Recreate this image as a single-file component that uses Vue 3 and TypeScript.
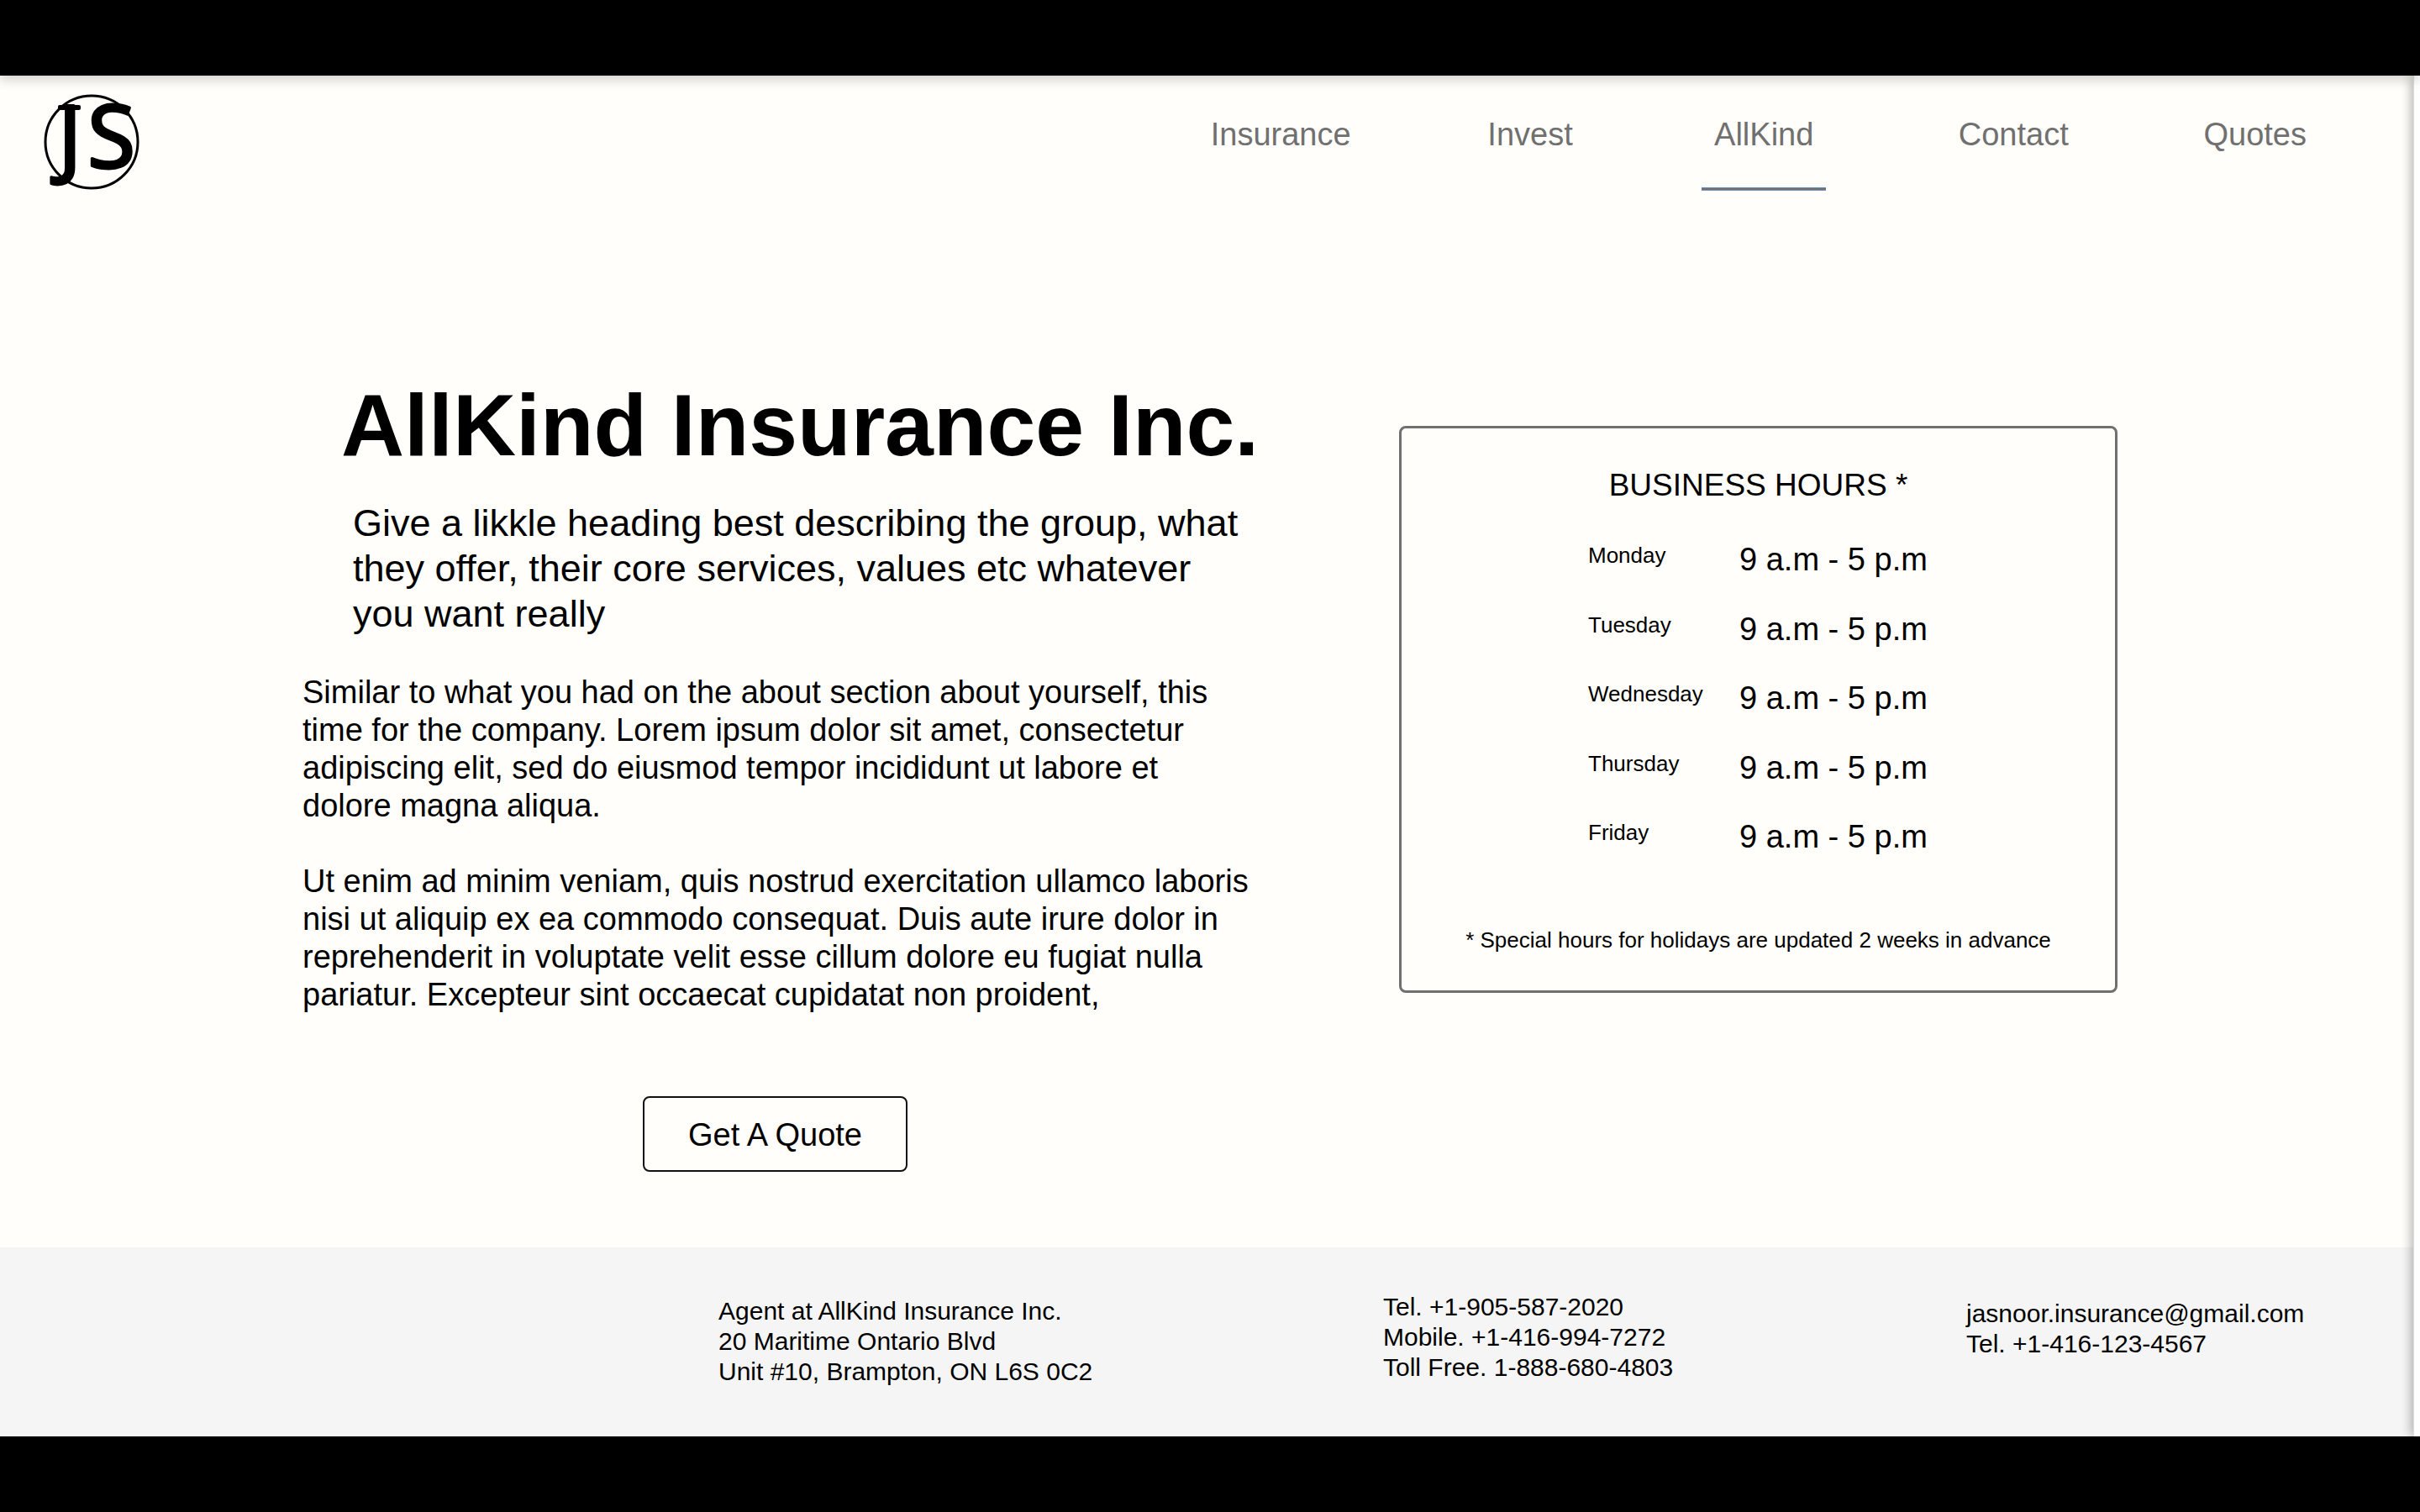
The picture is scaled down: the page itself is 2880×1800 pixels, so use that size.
<script setup lang="ts">
interface NavItem {
  label: string
  active?: boolean
}

const navItems: NavItem[] = [
  { label: 'Insurance' },
  { label: 'Invest' },
  { label: 'AllKind', active: true },
  { label: 'Contact' },
  { label: 'Quotes' },
]

const days: string[] = ['Monday', 'Tuesday', 'Wednesday', 'Thursday', 'Friday']
const openHours = '9 a.m - 5 p.m'

const intro = [
  'Give a likkle heading best describing the group, what',
  'they offer, their core services, values etc whatever',
  'you want really',
].join('\n')

const paragraphs: string[] = [
  [
    'Similar to what you had on the about section about yourself, this',
    'time for the company. Lorem ipsum dolor sit amet, consectetur',
    'adipiscing elit, sed do eiusmod tempor incididunt ut labore et',
    'dolore magna aliqua.',
  ].join('\n'),
  [
    'Ut enim ad minim veniam, quis nostrud exercitation ullamco laboris',
    'nisi ut aliquip ex ea commodo consequat. Duis aute irure dolor in',
    'reprehenderit in voluptate velit esse cillum dolore eu fugiat nulla',
    'pariatur. Excepteur sint occaecat cupidatat non proident,',
  ].join('\n'),
]
</script>

<template>
  <div class="screen">
    <div class="bar bar-top"></div>
    <div class="page">
      <div class="content">
        <header class="header">
          <a class="logo" href="#" aria-label="JS home">
            <svg viewBox="0 0 120 120" width="120" height="120">
              <circle cx="61" cy="61" r="55" fill="none" stroke="#000" stroke-width="3" />
              <rect x="21" y="17" width="27" height="6" rx="2" />
              <text class="logo-j" x="21" y="92">J</text>
              <text class="logo-s" x="56" y="92">S</text>
            </svg>
          </a>
          <nav class="nav">
            <a
              v-for="item in navItems"
              :key="item.label"
              href="#"
              class="nav-link"
              :class="{ active: item.active }"
            >{{ item.label }}</a>
          </nav>
        </header>

        <main class="main">
          <section class="about">
            <h1 class="title">AllKind Insurance Inc.</h1>
            <p class="intro">{{ intro }}</p>
            <p v-for="(text, i) in paragraphs" :key="i" class="copy">{{ text }}</p>
            <button type="button" class="quote">Get A Quote</button>
          </section>

          <section class="card">
            <h2 class="card-title">BUSINESS HOURS *</h2>
            <table class="hours">
              <tbody>
                <tr v-for="day in days" :key="day">
                  <th scope="row">{{ day }}</th>
                  <td>{{ openHours }}</td>
                </tr>
              </tbody>
            </table>
            <p class="note">* Special hours for holidays are updated 2 weeks in advance</p>
          </section>
        </main>

        <footer class="footer">
          <address class="col office">
            Agent at AllKind Insurance Inc.<br />20 Maritime Ontario Blvd<br />Unit #10, Brampton, ON L6S 0C2
          </address>
          <address class="col phones">
            Tel. +1-905-587-2020<br />Mobile. +1-416-994-7272<br />Toll Free. 1-888-680-4803
          </address>
          <address class="col direct">
            <a href="mailto:jasnoor.insurance@gmail.com">jasnoor.insurance@gmail.com</a><br />Tel. +1-416-123-4567
          </address>
        </footer>
      </div>
      <div class="rail"></div>
    </div>
    <div class="bar"></div>
  </div>
</template>

<style>
body {
  margin: 0;
  background: #000;
}
</style>

<style scoped>
.screen {
  display: flex;
  flex-direction: column;
  min-height: 100vh;
  overflow: hidden;
  color: #000;
  font-family: "Liberation Sans", Arial, sans-serif;
  font-size: 38px;
  line-height: 45px;
}

.bar {
  position: relative;
  z-index: 2;
  flex: none;
  height: 90px;
  background: #000;
}

.bar-top {
  box-shadow: 0 6px 12px rgba(0, 0, 0, 0.16);
}

.page {
  display: flex;
  flex: 1;
  background: #fffefa;
}

.content {
  display: flex;
  flex: 1;
  flex-direction: column;
  min-width: 0;
}

.rail {
  position: relative;
  z-index: 1;
  flex: none;
  box-sizing: border-box;
  width: 8px;
  border-left: 1px solid #ddd;
  background: #fff;
  box-shadow: 0 0 14px rgba(0, 0, 0, 0.5);
}

.header {
  display: flex;
  align-items: flex-start;
  justify-content: space-between;
  height: 158px;
  box-sizing: border-box;
  padding: 18px 112px 0 48px;
}

.logo {
  display: block;
  flex: none;
  height: 120px;
  color: #000;
}

.logo svg {
  display: block;
  overflow: visible;
}

.logo-j,
.logo-s {
  fill: #000;
  stroke: #000;
  stroke-linejoin: round;
  stroke-width: 3;
  font: 104px "Noto Sans", sans-serif;
}

.nav {
  display: grid;
  grid-template-columns: 330fr 270fr 291fr 292fr 152fr;
  justify-items: start;
  width: 49.2%;
  padding-top: 30px;
}

.nav-link {
  box-sizing: border-box;
  height: 89px;
  padding: 0 15px;
  color: #707070;
  text-decoration: none;
  white-space: nowrap;
}

.nav-link.active {
  background: linear-gradient(#6a8fc0 1px, #707070 1px, #707070 3px, #6a8fc0 3px) bottom / 100% 4px no-repeat;
}

.main {
  display: flex;
  flex: 1;
  align-items: flex-start;
  justify-content: space-between;
  padding: 195px 352px 90px 360px;
}

.about {
  display: flex;
  flex-direction: column;
  width: 1125px;
}

.title {
  margin: 0 0 27px 46px;
  font-size: 104px;
  font-weight: 700;
  line-height: 126px;
  white-space: nowrap;
}

.intro {
  margin: 0 0 44px 60px;
  font-size: 45px;
  line-height: 54px;
  white-space: pre;
}

.copy {
  margin: 0 0 45px;
  white-space: pre;
}

.quote {
  align-self: center;
  width: 315px;
  height: 90px;
  margin-top: 53px;
  padding: 2px 0 0;
  border: 2px solid #111;
  border-radius: 8px;
  background: transparent;
  color: inherit;
  font: inherit;
}

.card {
  box-sizing: border-box;
  width: 855px;
  margin-top: 64px;
  padding: 45px 0 44px;
  border: 3px solid #707070;
  border-radius: 8px;
  text-align: center;
}

.card-title {
  margin: 0 0 40px;
  font-size: 37px;
  font-weight: 400;
}

.hours {
  width: 405px;
  height: 413px;
  margin: 0 auto 50px;
  border-collapse: collapse;
  text-align: left;
}

.hours th,
.hours td {
  padding: 0;
  vertical-align: top;
  white-space: nowrap;
}

.hours th {
  width: 180px;
  padding-top: 5px;
  font-size: 26px;
  font-weight: 400;
  line-height: 32px;
}

.hours td {
  padding-top: 4px;
}

.note {
  margin: 0;
  font-size: 26px;
  line-height: 32px;
}

.footer {
  display: grid;
  grid-template-columns: 791fr 694fr 532fr;
  box-sizing: border-box;
  height: 225px;
  padding-left: 855px;
  background: #f5f5f5;
  font-size: 30px;
  line-height: 36px;
}

.col {
  font-style: normal;
  white-space: nowrap;
}

.col a {
  color: inherit;
  text-decoration: none;
}

.office {
  padding-top: 58px;
}

.phones {
  padding-top: 53px;
}

.direct {
  padding-top: 61px;
}
</style>
